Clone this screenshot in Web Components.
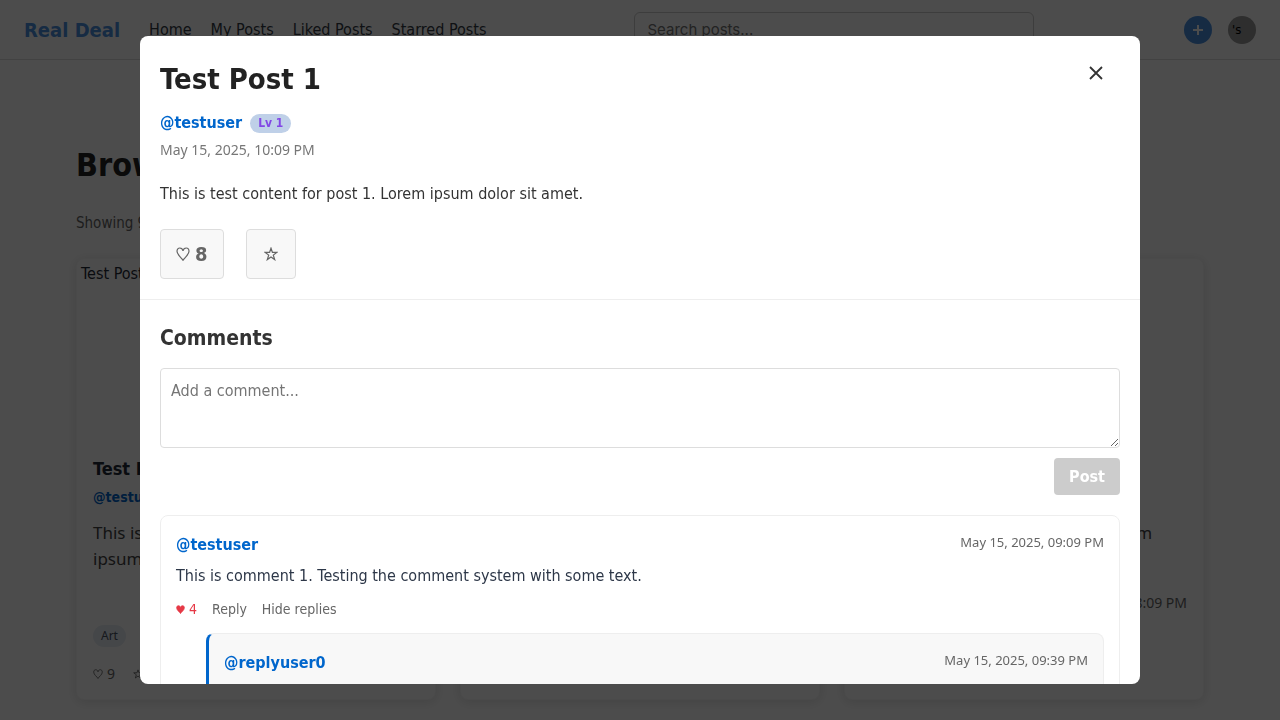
<!DOCTYPE html>
<html lang="en">
<head>
<meta charset="utf-8">
<meta name="viewport" content="width=device-width, initial-scale=1">
<title>Real Deal</title>
<style>
  body { margin: 0; height: 100vh; overflow: hidden; background: #fff; color: #1f2937; font: 16px/26px "DejaVu Sans Condensed", "DejaVu Sans", sans-serif; }
</style>
</head>
<body>
<real-deal-app></real-deal-app>
<script>
const define = (name, html) => customElements.define(name, class extends HTMLElement {
  connectedCallback() {
    if (this.shadowRoot) return;
    const root = this.attachShadow({ mode: "open" });
    const template = document.createElement("template");
    template.innerHTML = `<style>
      *{box-sizing:border-box}
      button,textarea{font:inherit}
      a{text-decoration:none}
      time,.small{font-family:"Noto Sans",sans-serif}
    </style>` + html;
    root.append(template.content.cloneNode(true));
  }
});

define("app-icon", `
<style>
  :host { display: inline-block; width: var(--icon-size, 14px); height: var(--icon-size, 14px); }
  svg { display: none; width: 100%; height: 100%; fill: none; stroke: currentColor; stroke-width: 1.2; stroke-linejoin: miter; }
  :host([name=heart]) .heart, :host([name=star]) .star { display: block; }
  :host([filled]) svg { fill: currentColor; }
</style>
<svg class="heart" viewBox="0 0 14 14"><path d="M7 13.300C5.600 10.600 1 8 1 4.300C1 2.200 2.200 1 3.800 1C5.600 1 6.700 2.400 7 4C7.300 2.400 8.400 1 10.200 1C11.800 1 13 2.200 13 4.300C13 8 8.400 10.600 7 13.300Z"/></svg>
<svg class="star" viewBox="0 0 14 14"><path d="M7 1.200L8.400 5.300H13L9.300 8.100L10.700 12.600L7 9.900L3.300 12.600L4.700 8.100L1 5.300H5.600Z"/></svg>`);

define("site-header", `
<style>
  :host { display: block; border-bottom: 1px solid #ddd; }
  header { display: flex; align-items: center; height: 59px; padding: 0 24px; }
  .brand { color: #4a90e2; font-size: 20px; font-weight: bold; }
  nav { display: flex; gap: 19px; margin-left: 29px; }
  nav a { color: #333a45; }
  label { flex: 0 1 400px; margin-left: 148px; }
  input { display: block; width: 100%; height: 36px; padding: 0 12px; border: 1px solid #ccc; border-radius: 6px; font: 15px Inter, sans-serif; background: #fff; }
  input::placeholder { color: #757575; }
  .actions { display: flex; gap: 16px; margin-left: auto; }
  .actions > * { width: 28px; height: 28px; padding: 0; border: 0; border-radius: 50%; }
  .add { display: grid; place-items: center; color: #fff; background: #4a90e2; }
  .avatar { overflow: hidden; padding-left: 4px; text-align: left; background: #999; color: #000; font-size: 13px; line-height: 28px; }
</style>
<header>
  <a class="brand" href="#">Real Deal</a>
  <nav><a href="#">Home</a><a href="#">My Posts</a><a href="#">Liked Posts</a><a href="#">Starred Posts</a></nav>
  <label><input type="search" aria-label="Search posts" placeholder="Search posts..."></label>
  <div class="actions">
    <button class="add" aria-label="New post"><svg width="12" height="12" viewBox="0 0 12 12" stroke="currentColor" stroke-width="2"><path d="M6 1v10M1 6h10"/></svg></button>
    <button class="avatar">'s</button>
  </div>
</header>`);

define("post-card", `
<style>
  :host { display: flex; flex-direction: column; border: 1px solid #f7f7f7; border-radius: 8px; background: #fff; box-shadow: 0 2px 12px rgba(0,0,0,.12); overflow: hidden; box-sizing: border-box; }
  .cover { height: 181px; padding: 2px 4px; }
  .body { display: flex; flex-direction: column; flex: 1; padding: 16px 16px 14px; }
  h2 { margin: 0; font-size: 18px; line-height: 26px; }
  .author { color: #0066cc; font-weight: bold; font-size: 14px; line-height: 30px; }
  p { margin: 8px 0 0; font: 17px/26px "Noto Sans", sans-serif; color: #444; }
  time { margin-top: 18px; align-self: flex-end; color: #666; font-size: 14px; line-height: 26px; }
  .tag { align-self: flex-start; margin-top: 9px; padding: 0 8px; border-radius: 11px; background: #e8edf5; color: #4b5563; font-size: 12px; line-height: 22px; }
  .stats { display: flex; align-items: center; gap: 18px; margin-top: 16px; color: #666; font-size: 14px; line-height: 22px; --icon-size: 10px; }
  .stats span { display: flex; align-items: center; gap: 4px; }
</style>
<div class="cover"><slot name="cover"></slot></div>
<div class="body">
  <h2><slot name="title"></slot></h2>
  <a class="author" href="#">@testuser</a>
  <p><slot></slot></p>
  <time><slot name="date"></slot></time>
  <span class="tag small">Art</span>
  <div class="stats small"><span><app-icon name="heart"></app-icon>9</span><app-icon name="star"></app-icon></div>
</div>`);

define("browse-page", `
<style>
  :host { display: block; max-width: 1200px; margin: 0 auto; padding: 82px 36px 0; box-sizing: border-box; }
  h1 { margin: 0; font-size: 32px; line-height: 46px; color: #222; }
  .count { margin: 22px 0; color: #666; font-size: 15px; line-height: 26px; }
  .grid { display: grid; grid-template-columns: repeat(3, 1fr); gap: 24px; }
</style>
<h1>Browse Posts</h1>
<p class="count">Showing 9 posts</p>
<div class="grid">
  <post-card><span slot="cover">Test Post 1</span><span slot="title">Test Post 1</span>This is test content for post 1. Lorem ipsum dolor sit amet.<span slot="date">10:09 PM</span></post-card>
  <post-card></post-card>
  <post-card><span slot="title">Test Post 3</span>This is test content for post 3. Lorem ipsum dolor sit amet.<span slot="date">May 15, 2025, 08:09 PM</span></post-card>
</div>`);

define("user-comment", `
<style>
  :host { display: block; padding: 15px; border: 1px solid #eee; border-radius: 8px; background: #fff; }
  :host([reply]) { min-height: 100px; margin: 12px 0 0 30px; background: #f8f8f8; border-left: 3px solid #0066cc; }
  :host([reply]) .actions { display: none; }
  .top { display: flex; justify-content: space-between; align-items: flex-start; }
  .top a { color: #0066cc; font-weight: bold; line-height: 28px; }
  time { color: #666; font-size: 13px; line-height: 22px; }
  p { margin: 4px 0 8px; line-height: 26px; color: #2d3748; }
  .actions { display: flex; gap: 15px; font-size: 14px; line-height: 24px; --icon-size: 9px; }
  .actions button { display: flex; align-items: center; gap: 4px; padding: 0; border: 0; background: none; color: #666; }
  .actions .liked { color: #e63946; }
</style>
<div class="top"><a href="#"><slot name="author"></slot></a><time><slot name="date"></slot></time></div>
<p><slot></slot></p>
<div class="actions"><button class="liked"><app-icon name="heart" filled></app-icon>4</button><button>Reply</button><button>Hide replies</button></div>
<slot name="replies"></slot>`);

define("post-dialog", `
<style>
  :host { position: fixed; inset: 0; display: grid; justify-items: center; align-items: center; background: rgba(0,0,0,.7); }
  section { width: 100%; max-width: 1000px; height: 90vh; overflow: hidden; border-radius: 8px; background: #fff; }
  .post { padding: 20px; border-bottom: 1px solid #eee; }
  .heading { display: flex; justify-content: space-between; align-items: flex-start; }
  h1 { margin: 0; font-size: 29px; line-height: 46px; color: #222; }
  .close { display: grid; place-items: center; width: 48px; height: 34px; padding: 0; border: 0; background: none; color: #333; }
  .author { display: flex; align-items: center; gap: 8px; margin-top: 7px; line-height: 28px; }
  .author a { color: #0066cc; font-weight: bold; }
  .level { padding: 0 8px; border-radius: 10px; background: #bfd0e8; color: #8247e5; font-size: 12px; line-height: 19px; font-weight: bold; }
  time { display: block; margin-top: 2px; color: #777; font-size: 14px; line-height: 22px; }
  p { margin: 20px 0 22px; line-height: 26px; color: #333; }
  .actions { display: flex; gap: 22px; }
  .actions button { display: flex; align-items: center; justify-content: center; gap: 5px; min-width: 50px; height: 50px; padding: 0 15px; border: 1px solid #ddd; border-radius: 4px; background: #f8f8f8; color: #666; font-size: 20px; }
  .actions b { line-height: 26px; }
  .comments { padding: 20px; }
  h2 { margin: 0 0 12px; font-size: 21px; line-height: 36px; color: #333; }
  textarea { display: block; width: 100%; height: 80px; padding: 10px; border: 1px solid #ddd; border-radius: 4px; resize: vertical; line-height: 24px; }
  textarea::placeholder { color: #757575; }
  .submit { display: block; margin: 10px 0 20px auto; height: 37px; padding: 0 15px; border: 0; border-radius: 4px; background: #ccc; color: #fff; font-weight: bold; }
</style>
<section role="dialog" aria-labelledby="title">
  <div class="post">
    <div class="heading"><h1 id="title">Test Post 1</h1><button class="close" aria-label="Close"><svg width="14" height="14" viewBox="0 0 14 14" stroke="currentColor" stroke-width="1.800"><path d="M1 1l12 12M13 1L1 13"/></svg></button></div>
    <div class="author"><a href="#">@testuser</a><span class="level">Lv 1</span></div>
    <time>May 15, 2025, 10:09 PM</time>
    <p>This is test content for post 1. Lorem ipsum dolor sit amet.</p>
    <div class="actions"><button><app-icon name="heart"></app-icon><b>8</b></button><button aria-label="Star"><app-icon name="star"></app-icon></button></div>
  </div>
  <div class="comments">
    <h2>Comments</h2>
    <textarea aria-label="Add a comment" placeholder="Add a comment..."></textarea>
    <button class="submit">Post</button>
    <user-comment><span slot="author">@testuser</span><span slot="date">May 15, 2025, 09:09 PM</span>This is comment 1. Testing the comment system with some text.
      <user-comment reply slot="replies"><span slot="author">@replyuser0</span><span slot="date">May 15, 2025, 09:39 PM</span></user-comment>
    </user-comment>
  </div>
</section>`);

define("real-deal-app", `
<style>:host { display: block; }</style>
<site-header></site-header>
<browse-page></browse-page>
<post-dialog></post-dialog>`);
</script>
</body>
</html>
